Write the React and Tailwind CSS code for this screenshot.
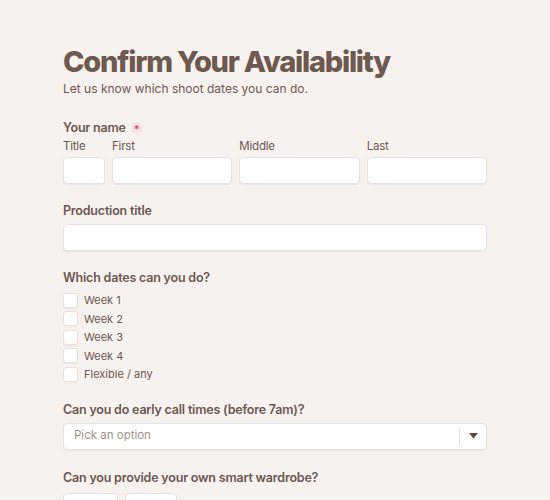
import { useState } from "react";

const boxCls =
  "h-[27px] rounded-[4px] border border-[#ebe1dc] bg-white shadow-[0_1px_1px_rgba(120,90,80,0.08)]";
const inputCls = `${boxCls} outline-none px-2 text-[12px] text-[#6b5850]`;
const labelCls = "block text-[12.5px] font-semibold tracking-[-0.2px] leading-[18px]";

const weeks = ["Week 1", "Week 2", "Week 3", "Week 4", "Flexible / any"];

const App = () => {
  const [dates, setDates] = useState({});

  return (
    <div
      className="min-h-screen bg-[#f8f2ef] text-[#6b5850]"
      style={{ fontFamily: "Inter, 'Noto Sans', sans-serif" }}
    >
      <div className="w-[424px] ml-[63px] pt-[44px]">
        <h1 className="text-[29px] leading-[36px] font-extrabold tracking-[-1.25px] text-[#6d5950]">
          Confirm Your Availability
        </h1>
        <p className="text-[12px] leading-[16px] mt-[1px]">Let us know which shoot dates you can do.</p>

        {/* Name */}
        <div className="mt-[22px]">
          <div className={`${labelCls} flex items-center gap-[5px]`}>
            Your name
            <span className="w-[12px] h-[12px] rounded-full bg-[#f1e6e4] flex items-center justify-center text-[#e0457b] text-[11px] leading-none pt-[3px]">
              *
            </span>
          </div>
          <div className="flex gap-[7px] mt-[1px]">
            {[
              ["Title", "w-[42px]"],
              ["First", "flex-1"],
              ["Middle", "flex-1"],
              ["Last", "flex-1"],
            ].map(([label, w]) => (
              <div key={label} className={`${w} flex flex-col`}>
                <label className="text-[11.5px] tracking-[-0.2px] leading-[16px] mb-[3px]">{label}</label>
                <input className={`${inputCls} w-full`} />
              </div>
            ))}
          </div>
        </div>

        {/* Production title */}
        <div className="mt-[18px]">
          <label className={`${labelCls} mb-[4px]`}>Production title</label>
          <input className={`${inputCls} w-full`} />
        </div>

        {/* Dates */}
        <div className="mt-[18px]">
          <label className={`${labelCls} mb-[4px]`}>Which dates can you do?</label>
          <div className="flex flex-col">
            {weeks.map((w) => (
              <label key={w} className="flex items-center gap-[6px] h-[18.5px] text-[11px] cursor-pointer">
                <input
                  type="checkbox"
                  checked={!!dates[w]}
                  onChange={() => setDates((p) => ({ ...p, [w]: !p[w] }))}
                  className="appearance-none w-[15px] h-[15px] rounded-[3px] border border-[#ebe1dc] bg-white shadow-[0_1px_1px_rgba(120,90,80,0.08)] checked:bg-[#6b5850]"
                />
                {w}
              </label>
            ))}
          </div>
        </div>

        {/* Early call */}
        <div className="mt-[17px]">
          <label className={`${labelCls} mb-[4px]`}>Can you do early call times (before 7am)?</label>
          <div className={`${boxCls} w-full flex items-center`}>
            <span className="flex-1 pl-[10px] text-[11.5px] text-[#a1928c]">Pick an option</span>
            <span className="w-px h-[17px] bg-[#ebe1dc]" />
            <span className="w-[26px] flex justify-center">
              <svg width="9" height="6" viewBox="0 0 9 6">
                <path d="M0 0h9L4.5 5.5z" fill="#5d4a43" />
              </svg>
            </span>
          </div>
        </div>

        {/* Wardrobe */}
        <div className="mt-[19px]">
          <label className={`${labelCls} mb-[6px]`}>Can you provide your own smart wardrobe?</label>
          <div className="flex gap-[7px]">
            {["Yes", "No"].map((o, i) => (
              <button
                key={o}
                className={`${i === 0 ? "w-[55px]" : "w-[52px]"} h-[30px] rounded-[4px] border border-[#ebe1dc] bg-white text-[11px] flex items-center gap-[6px] px-[10px]`}
              >
                <span className="w-[12px] h-[12px] rounded-full border border-[#cfc2bc]" />
                {o}
              </button>
            ))}
          </div>
        </div>
      </div>
    </div>
  );
};

export default App;
